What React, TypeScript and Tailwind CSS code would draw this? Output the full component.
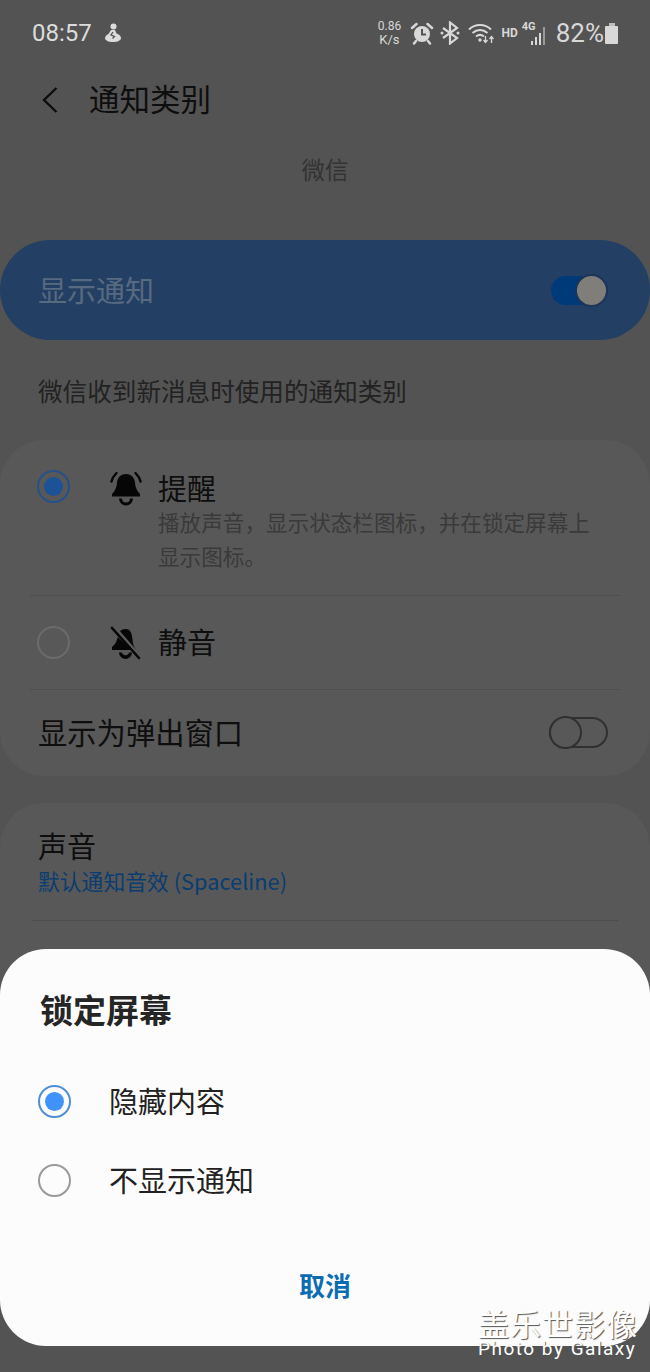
import React from "react";

const FONT = { fontFamily: '"Noto Sans CJK SC", "Noto Sans", sans-serif' };

const Radio: React.FC<{ checked?: boolean; dim?: boolean }> = ({ checked, dim }) => {
  if (dim) {
    return (
      <div
        className={`w-[33px] h-[33px] rounded-full border-2 flex items-center justify-center shrink-0 ${
          checked ? "border-[#25518a]" : "border-[#6b6b6b]"
        }`}
      >
        {checked && <div className="w-[19px] h-[19px] rounded-full bg-[#1c5296]" />}
      </div>
    );
  }
  return (
    <div
      className={`w-[33px] h-[33px] rounded-full border-2 flex items-center justify-center shrink-0 ${
        checked ? "border-[#4f8fd6]" : "border-[#9a9a9a]"
      }`}
    >
      {checked && <div className="w-[19px] h-[19px] rounded-full bg-[#3f92f8]" />}
    </div>
  );
};

const BellRing = () => (
  <svg width="34" height="36" viewBox="0 0 34 36" fill="none" className="shrink-0">
    <path d="M17 4c-5.500 0-8.500 3.500-9 9-.4 4.500-2 8-5 11v2.500h28V24c-3-3-4.600-6.500-5-11-.5-5.500-3.500-9-9-9z" fill="#060606" />
    <path d="M10 28.500a7 7 0 0 0 14 0h-3a4 4 0 0 1-8 0z" fill="#060606" />
    <path d="M2.500 11.500C3.300 8 5 5.500 7.500 3M31.500 11.500c-.8-3.500-2.500-6-5-8.500" stroke="#060606" strokeWidth="2.400" strokeLinecap="round" />
  </svg>
);

const BellOff = () => (
  <svg width="32" height="34" viewBox="0 0 32 34" fill="none" className="shrink-0">
    <path d="M16 3c-2.600 0-4.600.8-6 2.300L26 23.500c-2.200-2.500-3.200-5.500-3.500-10C22 7 20 3 16 3zM7.700 11C7 15.500 5 18.500 2 21v3h20z" fill="#060606" />
    <path d="M9 26.500a6.500 6.500 0 0 0 13 0h-3a3.600 3.600 0 0 1-7 0z" fill="#060606" />
    <path d="M2 2l27 30" stroke="#060606" strokeWidth="2.600" strokeLinecap="round" />
  </svg>
);

const StatusIcons = () => (
  <div className="flex items-center text-[#d8d8d8]">
    <div className="w-[30px] text-center text-[12px] leading-[13px]" style={{ fontFamily: "Roboto, sans-serif" }}>
      0.86
      <br />
      <span className="text-[13px]">K/s</span>
    </div>
    {/* alarm */}
    <svg width="24" height="24" viewBox="0 0 24 24" className="ml-[6px]" fill="none">
      <circle cx="12" cy="13" r="8" fill="#d8d8d8" />
      <path d="M12 8v5.500h4" stroke="#535353" strokeWidth="2" />
      <path d="M2 7l4.500-4M22 7l-4.500-4M6 20l-2 2.500M18 20l2 2.500" stroke="#d8d8d8" strokeWidth="2.500" strokeLinecap="round" />
    </svg>
    {/* bluetooth */}
    <svg width="20" height="24" viewBox="0 0 20 24" className="ml-[6px]" fill="none">
      <path d="M3 7l14 10-7 5.500V1.500L17 7 3 17" stroke="#d8d8d8" strokeWidth="2.200" />
      <circle cx="2" cy="12" r="1.500" fill="#d8d8d8" />
      <circle cx="18" cy="12" r="1.500" fill="#d8d8d8" />
    </svg>
    {/* wifi */}
    <svg width="27" height="24" viewBox="0 0 27 24" className="ml-[8px]" fill="none">
      <path d="M1 8.500C7 2.500 17 2.500 23 8.500M4.500 12c4.500-4 10.500-4 15 0M8 15.500c2.500-2 5.500-2 8 0" stroke="#d8d8d8" strokeWidth="2" />
      <circle cx="12" cy="19" r="1.700" fill="#d8d8d8" />
      <path d="M17.500 15v6M15.500 19l2 2.500 2-2.500M23.500 22v-6M21.500 18l2-2.500 2 2.500" stroke="#d8d8d8" strokeWidth="1.300" />
    </svg>
    <span className="ml-[6px] text-[12px] font-bold" style={{ fontFamily: "Roboto, sans-serif" }}>
      HD
    </span>
    {/* 4G signal */}
    <div className="relative w-[23px] h-[24px] ml-[4px]">
      <span className="absolute left-0 top-[-1px] text-[11px] font-bold leading-[13px]" style={{ fontFamily: "Roboto, sans-serif" }}>
        4G
      </span>
      <div className="absolute right-0 bottom-0 flex items-end gap-[2px]">
        <div className="w-[2px] h-[4px] bg-[#d8d8d8]" />
        <div className="w-[2px] h-[8px] bg-[#d8d8d8]" />
        <div className="w-[2px] h-[12px] bg-[#d8d8d8]" />
        <div className="w-[2px] h-[18px] bg-[#9a9a9a]" />
      </div>
    </div>
    <span className="ml-[11px] text-[26px] leading-none" style={{ fontFamily: "Roboto, sans-serif" }}>
      82%
    </span>
    {/* battery */}
    <div className="ml-[1px] flex flex-col items-center">
      <div className="w-[6px] h-[3px] bg-[#bdbdbd]" />
      <div className="w-[13px] h-[18px] bg-[#d8d8d8] rounded-[1px]" />
    </div>
  </div>
);

const App: React.FC = () => {
  return (
    <div className="relative w-[650px] h-[1372px] overflow-hidden bg-[#535353]" style={FONT}>
      {/* Status bar */}
      <div className="h-[66px] pl-[32px] pr-[32px] flex items-center justify-between">
        <div className="flex items-center">
          <span className="text-[24px] leading-none text-[#dcdcdc]" style={{ fontFamily: "Roboto, sans-serif" }}>
            08:57
          </span>
          <svg width="18" height="20" viewBox="0 0 18 20" className="ml-[12px]">
            <circle cx="9.500" cy="3.500" r="3" fill="#dcdcdc" />
            <path d="M7 7h4l1.500 3.500c2.500.8 4.500 2.500 4.500 4.500 0 2.500-3.500 4-8 4s-8-1.500-8-4c0-1.500 1.500-3 3.500-4z" fill="#dcdcdc" />
            <path d="M9 9l-2 3 3.500 1.500-2 2" stroke="#535353" strokeWidth="1.300" fill="none" />
          </svg>
        </div>
        <StatusIcons />
      </div>

      {/* Toolbar */}
      <div className="h-[68px] flex items-center pl-[41px]">
        <svg width="18" height="28" viewBox="0 0 18 28" fill="none">
          <path d="M15.500 2L3 14l12.500 12" stroke="#0c0c0c" strokeWidth="2.300" />
        </svg>
        <h1 className="ml-[30px] -mt-[4px] text-[30.500px] leading-none text-[#0e0e0e]">通知类别</h1>
      </div>

      <div className="mt-[20px] text-center text-[23.500px] leading-[30px] text-[#333333]">微信</div>

      {/* Show notifications */}
      <div className="mt-[56px] h-[100px] rounded-[50px] bg-[#243f64] flex items-center justify-between pl-[38px] pr-[42px]">
        <span className="text-[29px] text-[#586a80]">显示通知</span>
        <div className="relative w-[57px] h-[29px] rounded-full bg-[#003a78]">
          <div className="absolute right-0 top-[-2px] w-[33px] h-[33px] rounded-full bg-[#807e78] border-2 border-[#1d3558]" />
        </div>
      </div>

      <p className="mt-[32px] pl-[38px] text-[24.600px] leading-[36px] text-[#222222]">微信收到新消息时使用的通知类别</p>

      {/* Category card */}
      <div className="mt-[32px] h-[336px] rounded-[44px] bg-[#585858] px-[37px]">
        <div className="flex h-[156px] pt-[30px] border-b border-[#4e4e4e] -mx-[7px] px-[7px]">
          <Radio checked dim />
          <div className="ml-[39px]">
            <BellRing />
          </div>
          <div className="ml-[15px] -mt-[3px]">
            <div className="text-[29px] leading-[40px] text-[#0e0e0e]">提醒</div>
            <div className="text-[21.600px] leading-[34px] -mt-[2px] w-[440px] text-[#3a3a3a]">
              播放声音，显示状态栏图标，并在锁定屏幕上显示图标。
            </div>
          </div>
        </div>
        <div className="flex items-center h-[94px] border-b border-[#4e4e4e] -mx-[7px] px-[7px]">
          <Radio dim />
          <div className="ml-[40px]">
            <BellOff />
          </div>
          <span className="ml-[16px] -mt-[2px] text-[29px] text-[#0e0e0e]">静音</span>
        </div>
        <div className="flex items-center justify-between h-[85px] pl-[1px] pr-[5px]">
          <span className="-mt-[2px] text-[29.300px] text-[#0e0e0e]">显示为弹出窗口</span>
          <div className="relative w-[59px] h-[31px] rounded-full border-2 border-[#303030]">
            <div className="absolute left-[-2px] top-[-3px] w-[33px] h-[33px] rounded-full border-2 border-[#303030] bg-[#585858]" />
          </div>
        </div>
      </div>

      {/* Sound card */}
      <div className="mt-[27px] h-[400px] rounded-[44px] bg-[#585858] px-[38px] pt-[22px]">
        <div className="text-[29px] leading-[40px] text-[#0e0e0e]">声音</div>
        <div className="text-[21.800px] leading-[32px] text-[#0a3d70]">默认通知音效 (Spaceline)</div>
        <div className="mt-[23px] border-t border-[#4e4e4e] -mx-[6px]" />
      </div>

      {/* Lock screen sheet */}
      <div className="absolute left-0 right-0 top-[949px] h-[397px] rounded-[46px] bg-[#fcfcfc] px-[38px] pt-[37px]">
        <h2 className="pl-[2px] text-[33px] leading-[46px] font-bold text-[#252525]">锁定屏幕</h2>
        <div className="mt-[44px] flex items-center h-[50px]">
          <Radio checked />
          <span className="ml-[38px] -mt-[1px] text-[29px] text-[#222222]">隐藏内容</span>
        </div>
        <div className="mt-[29px] flex items-center h-[50px]">
          <Radio />
          <span className="ml-[38px] -mt-[1px] text-[29px] text-[#222222]">不显示通知</span>
        </div>
        <div className="mt-[61px] text-center text-[26px] font-bold leading-[38px] text-[#0b6cb4]">取消</div>
      </div>

      {/* Watermark */}
      <div className="absolute left-[478px] top-[1306px] w-[165px] text-white [text-shadow:1px_1px_1px_#555]">
        <div className="text-[31px] leading-[34px] tracking-[1px] whitespace-nowrap">盖乐世影像</div>
        <div className="text-[19px] leading-[18px] tracking-[1.500px] whitespace-nowrap" style={{ fontFamily: "Roboto, sans-serif" }}>
          Photo by Galaxy
        </div>
      </div>
    </div>
  );
};

export default App;
